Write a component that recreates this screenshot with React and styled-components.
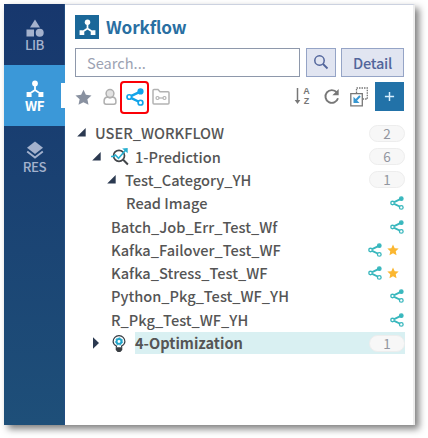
import React from "react";
import styled, { createGlobalStyle } from "styled-components";

const GlobalStyle = createGlobalStyle`
  *, *::before, *::after { box-sizing: border-box; }
  body { margin: 0; background: #fff; overflow: hidden; font-family: "Noto Sans CJK KR", "Noto Sans", sans-serif; }
  svg { display: block; flex: none; }
`;

const Page = styled.div`
  width: 428px;
  height: 438px;
  padding: 4px 0 0 4px;
`;
const Window = styled.main`
  display: flex;
  width: 411px;
  height: 421px;
  background: #fff;
  box-shadow: 4px 4px 7px rgba(0, 0, 0, 0.5);
`;
const Sidebar = styled.nav`
  width: 61px;
  background: linear-gradient(#17376d, #1e4f79);
  border-right: 1px solid #214c80;
`;
const NavItem = styled.div`
  position: relative;
  width: 61px;
  height: 61px;
  padding-top: 15px;
  display: flex;
  flex-direction: column;
  align-items: center;
  color: ${(p) => (p.$active ? "#fff" : "#a4b2cd")};
  background: ${(p) => (p.$active ? "#3b98d8" : "transparent")};
`;
const NavLabel = styled.span`
  font-size: 13.3px;
  line-height: 16px;
  font-weight: ${(p) => (p.$bold ? 700 : 500)};
  letter-spacing: -0.5px;
`;
const Notch = styled.i`
  position: absolute;
  right: 0;
  top: 18px;
  width: 4px;
  height: 25px;
  background: #fff;
`;
const Panel = styled.section`
  flex: 1;
  border-top: 1px solid #ccd2e0;
  border-right: 2px solid #ededed;
  padding: 10px 0 0 10px;
`;
const Header = styled.header`
  display: flex;
  align-items: center;
  gap: 7px;
  height: 24px;
`;
const Logo = styled.div`
  width: 24px;
  height: 24px;
  display: grid;
  place-items: center;
  color: #fff;
  background: #1b6899;
`;
const Title = styled.h1`
  margin: 0;
  color: #296fa2;
  font-size: 17.2px;
  line-height: 24px;
  font-weight: 700;
  letter-spacing: -0.15px;
`;
const SearchRow = styled.div`
  display: flex;
  margin-top: 9px;
  width: 329px;
  height: 29px;
`;
const SearchBox = styled.input`
  width: 225px;
  height: 29px;
  margin: 0 6px 0 0;
  padding: 0 0 1px 11px;
  border: 1px solid #8e98ab;
  outline: none;
  font: 400 14.6px "Noto Sans CJK KR", sans-serif;
  &::placeholder { color: #9ca2b2; opacity: 1; }
`;
const Button = styled.button`
  width: ${(p) => p.$width}px;
  height: 29px;
  margin-right: ${(p) => p.$gap || 0}px;
  padding: 0 0 1px;
  display: grid;
  place-items: center;
  border: 1px solid #95a4c6;
  background: #e1e5f1;
  color: #52659b;
  font: 500 14.6px "Noto Sans CJK KR", sans-serif;
  letter-spacing: -0.3px;
`;
const Toolbar = styled.div`
  display: flex;
  align-items: center;
  width: 329px;
  height: 33px;
  margin-top: 4px;
`;
const Tool = styled.span`
  display: grid;
  justify-items: ${(p) => p.$align || "center"};
  align-items: center;
  width: ${(p) => p.$width}px;
  height: 33px;
  padding-bottom: ${(p) => p.$lift || 0}px;
  color: #8a8a8a;
`;
const Selected = styled(Tool)`
  border: 2.5px solid #fb0006;
  border-radius: 4px;
`;
const Spacer = styled.span`flex: 1;`;
const AddButton = styled.button`
  width: 29px;
  height: 29px;
  margin: 0 0 2px 2px;
  padding: 0;
  display: grid;
  place-items: center;
  border: 0;
  color: #d8efff;
  background: #2272a8;
`;
const Tree = styled.ul`
  margin: 7.6px 0 0;
  padding: 0;
  width: 330px;
  list-style: none;
`;
const TreeRow = styled.li`
  display: flex;
  align-items: center;
  height: 23.32px;
  padding-left: ${(p) => p.$indent}px;
`;
const Arrow = styled.span`width: 18px;`;
const CategoryIcon = styled.span`width: 25px;`;
const RowBody = styled.div`
  flex: 1;
  display: flex;
  align-items: center;
  justify-content: space-between;
  height: 22px;
  background: ${(p) => (p.$selected ? "#d9f0f2" : "transparent")};
`;
const Name = styled.span`
  color: #555;
  font-size: 14.6px;
  line-height: 22px;
  white-space: nowrap;
  font-weight: ${(p) => (p.$bold ? 700 : 500)};
`;
const Count = styled.span`
  width: 36px;
  height: 17px;
  border: 1px solid #ededed;
  border-radius: 9px;
  background: #f7f7f7;
  color: #9296a0;
  text-align: center;
  font-size: 13.5px;
  line-height: 15px;
`;
const Marks = styled.span`
  display: flex;
  align-items: center;
  gap: 5px;
  padding-right: ${(p) => (p.$starred ? 6 : 1)}px;
`;

const FlowIcon = ({ size = 18 }) => (
  <svg width={size} height={size} viewBox="0 0 18 18" fill="currentColor">
    <path d="M9 3v7L3 14M9 10l6 4" fill="none" stroke="currentColor" strokeWidth="1.8" />
    <circle cx="9" cy="3.4" r="2.9" />
    <path d="M.6 12h3l2 2v3h-5zM17.4 12h-3l-2 2v3h5z" />
  </svg>
);
const ShapesIcon = () => (
  <svg width="18" height="18" viewBox="0 0 18 18" fill="currentColor">
    <path d="m9 .5 5 8H4zM.5 10.5h7.5v7H.5z" /><circle cx="13.7" cy="13.8" r="4" />
  </svg>
);
const LayersIcon = () => (
  <svg width="18" height="18" viewBox="0 0 18 18">
    <path d="m9 .5 8 6.2-8 6.2-8-6.2z" fill="currentColor" />
    <path d="m1.2 10.5 7.8 6 7.8-6" fill="none" stroke="currentColor" strokeWidth="1.8" />
  </svg>
);
const StarIcon = ({ size, color }) => (
  <svg width={size} height={size} viewBox="0 0 18 18">
    <path d="m9 .8 2.5 5.4 6 .7-4.4 4 1.2 5.9L9 13.9l-5.3 2.9 1.2-5.9-4.4-4 6-.7z" fill={color} />
  </svg>
);
const ShareIcon = ({ size = 14, color = "#38b7bd" }) => (
  <svg width={size} height={size} viewBox="0 0 16 16" fill="none" stroke={color} strokeWidth="1.5">
    <path d="m4.8 7 7-3.3M4.8 9l6.2 3" strokeWidth="2.2" />
    <circle cx="2.9" cy="8" r="2" /><circle cx="12.9" cy="3" r="2" fill={color} /><circle cx="12.9" cy="13" r="2.1" />
  </svg>
);
const UserIcon = () => (
  <svg width="14" height="18" viewBox="0 0 15 18" fill="none" stroke="#afafaf" strokeWidth="1.6">
    <circle cx="7.5" cy="5.2" r="4.2" fill="#e2e2e2" />
    <path d="M4.5 9Q1.2 9.8 1.2 13v1.7q0 2 2 2h8.6q2 0 2-2V13q0-3.2-3.3-4-3 2-6 0z" />
  </svg>
);
const FolderIcon = () => (
  <svg width="18" height="18" viewBox="0 0 18 18" fill="none" stroke="#b2b2b2" strokeWidth="1.5">
    <path d="M1 15V2.5q0-1 1-1h4l2 2.3h8q1 0 1 1V15q0 1-1 1H2q-1 0-1-1z" />
    <g strokeWidth="1.2"><circle cx="5.5" cy="10" r="1.5" /><circle cx="12.5" cy="10" r="1.5" /><path d="M7 10h4" /></g>
  </svg>
);
const SearchIcon = () => (
  <svg width="16" height="16" viewBox="0 0 16 16" fill="none" stroke="currentColor">
    <circle cx="6.5" cy="6.5" r="4.7" strokeWidth="1.5" /><path d="m10 10 4.5 4.5" strokeWidth="1.8" />
  </svg>
);
const SortArrow = () => (
  <svg width="7" height="18" viewBox="0 0 7 18">
    <path d="M3.5 1v14" stroke="#777" strokeWidth="1.5" /><path d="M.7 13h5.6l-2.8 4z" fill="#777" />
  </svg>
);
const SortGroup = styled.span`display: flex; align-items: center; gap: 2px;`;
const SortLetters = styled.span`
  display: flex;
  flex-direction: column;
  align-items: center;
  font: 700 9px/10px "Liberation Sans", sans-serif;
  color: #777;
`;
const RefreshIcon = () => (
  <svg width="17" height="17" viewBox="0 0 17 17" fill="none" stroke="#777" strokeWidth="1.9">
    <path d="M13.8 4.4A6.4 6.4 0 1 0 15 10.3" /><path d="M15.7 1v6.3H9.4z" fill="#777" stroke="none" />
  </svg>
);
const CollapseIcon = () => (
  <svg width="18" height="20" viewBox="0 0 18 20" fill="none" stroke="#777">
    <path d="M6.5 6V1h10.8v11H13" strokeWidth="1.3" strokeDasharray="1.5 1" />
    <path d="M.8 6.7h11.5v12.1H.8z" strokeWidth="1.3" />
    <path d="m10 9-5 5.2" stroke="#3797d1" strokeWidth="2" /><path d="M3.5 9.8v6.1h6z" fill="#3797d1" stroke="none" />
  </svg>
);
const PlusIcon = () => (
  <svg width="11" height="11" viewBox="0 0 12 12" stroke="currentColor" strokeWidth="1.6"><path d="M6 1v10M1 6h10" /></svg>
);
const Triangle = ({ open }) => (
  <svg width="9" height="12" viewBox="0 0 9 12" fill="#2b3950"><path d={open ? "M8.7 1v8.5H.2z" : "M1 .2 7 6l-6 5.8z"} /></svg>
);
const PredictionIcon = () => (
  <svg width="19" height="19" viewBox="0 0 19 19" fill="none">
    <circle cx="9" cy="8.8" r="5.5" stroke="#43464a" strokeWidth="1.7" />
    <path d="m13.2 12.8 4.7 4.7" stroke="#43464a" strokeWidth="2" />
    <path d="M1 9.5h2.5l2-1.5 3 3.2L16 2.7" stroke="#27afd0" strokeWidth="1.6" />
    <path d="m12.2 1.5 5.5-.6v5.3z" fill="#27afd0" />
  </svg>
);
const BulbFrame = styled.span`display: block; padding: 1px 0 0 2px;`;
const OptimizationIcon = () => (
  <BulbFrame>
    <svg width="14" height="18" viewBox="0 0 15 19" fill="none">
      <path d="M4.7 13.2v-1.5Q1.2 9.7 1.2 6.8a6.3 6.3 0 0 1 12.6 0q0 2.9-3.5 4.9v1.5" stroke="#3a4148" strokeWidth="1.3" />
      <circle cx="7.5" cy="6.8" r="2.6" stroke="#20a5ca" strokeWidth="2" />
      <circle cx="7.5" cy="6.8" r="3.9" stroke="#20a5ca" strokeDasharray="1.8 1.7" />
      <path d="M4 13h7v3l-2 2H6l-2-2z" fill="#393e43" />
    </svg>
  </BulbFrame>
);

const rows = [
  { name: "USER_WORKFLOW", indent: 2, open: true, count: 2 },
  { name: "1-Prediction", indent: 17, open: true, icon: <PredictionIcon />, count: 6 },
  { name: "Test_Category_YH", indent: 32, open: true, count: 1 },
  { name: "Read Image", indent: 51 },
  { name: "Batch_Job_Err_Test_Wf", indent: 36 },
  { name: "Kafka_Failover_Test_WF", indent: 36, starred: true },
  { name: "Kafka_Stress_Test_WF", indent: 36, starred: true },
  { name: "Python_Pkg_Test_WF_YH", indent: 36 },
  { name: "R_Pkg_Test_WF_YH", indent: 36 },
  { name: "4-Optimization", indent: 17, icon: <OptimizationIcon />, count: 1, selected: true },
];

export default function App() {
  return (
    <Page>
      <GlobalStyle />
      <Window>
        <Sidebar>
          <NavItem><ShapesIcon /><NavLabel>LIB</NavLabel></NavItem>
          <NavItem $active><FlowIcon /><NavLabel $bold>WF</NavLabel><Notch /></NavItem>
          <NavItem><LayersIcon /><NavLabel>RES</NavLabel></NavItem>
        </Sidebar>
        <Panel>
          <Header><Logo><FlowIcon size={17} /></Logo><Title>Workflow</Title></Header>
          <SearchRow>
            <SearchBox placeholder="Search..." aria-label="Search" />
            <Button $width={30} $gap={5} aria-label="Find"><SearchIcon /></Button>
            <Button $width={63}>Detail</Button>
          </SearchRow>
          <Toolbar>
            <Tool $width={17} $lift={1}><StarIcon size={17} color="#8991a0" /></Tool>
            <Tool $width={8} />
            <Tool $width={20} $lift={2}><UserIcon /></Tool>
            <Selected $width={29} $lift={1}><ShareIcon size={18} color="#12a4e9" /></Selected>
            <Tool $width={24} $lift={1}><FolderIcon /></Tool>
            <Spacer />
            <Tool $width={20} $lift={3}>
              <SortGroup><SortArrow /><SortLetters><span>A</span><span>Z</span></SortLetters></SortGroup>
            </Tool>
            <Tool $width={38} $lift={2}><RefreshIcon /></Tool>
            <Tool $width={23} $align="start" $lift={1}><CollapseIcon /></Tool>
            <AddButton aria-label="Add"><PlusIcon /></AddButton>
          </Toolbar>
          <Tree>
            {rows.map((row) => (
              <TreeRow key={row.name} $indent={row.indent}>
                {row.count && <Arrow><Triangle open={row.open} /></Arrow>}
                {row.icon && <CategoryIcon>{row.icon}</CategoryIcon>}
                <RowBody $selected={row.selected}>
                  <Name $bold={row.selected}>{row.name}</Name>
                  {row.count ? <Count>{row.count}</Count> : (
                    <Marks $starred={row.starred}><ShareIcon />{row.starred && <StarIcon size={12} color="#fbb731" />}</Marks>
                  )}
                </RowBody>
              </TreeRow>
            ))}
          </Tree>
        </Panel>
      </Window>
    </Page>
  );
}
